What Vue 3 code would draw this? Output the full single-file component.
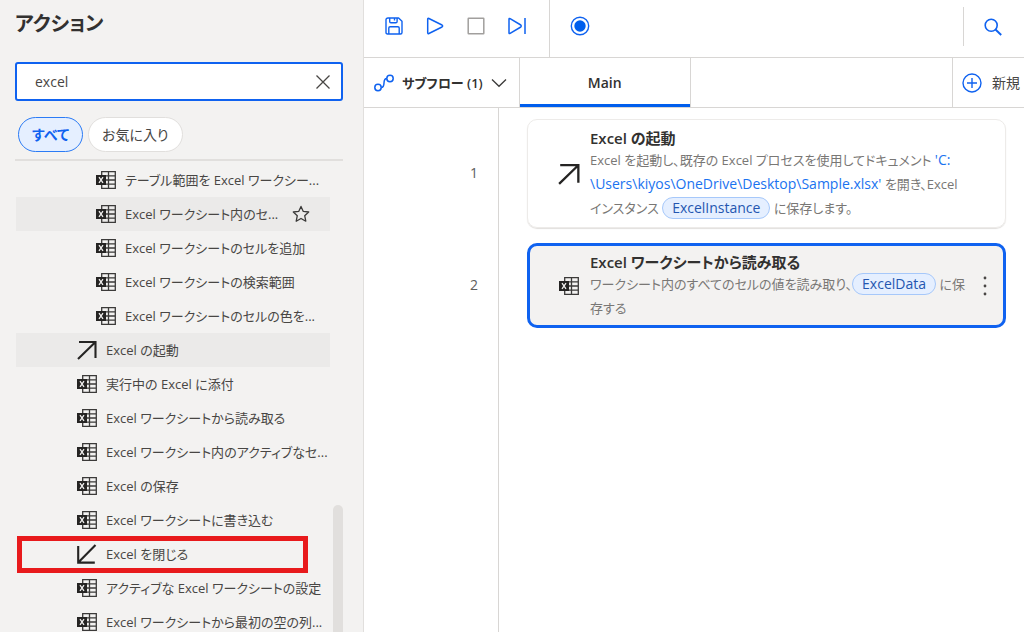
<script setup>
import { ref } from 'vue'

const query = ref('excel')
const filter = ref('all')

const actions = [
  { label: 'テーブル範囲を Excel ワークシー...', icon: 'excel', nested: true },
  { label: 'Excel ワークシート内のセ...', icon: 'excel', nested: true, shaded: true, star: true },
  { label: 'Excel ワークシートのセルを追加', icon: 'excel', nested: true },
  { label: 'Excel ワークシートの検索範囲', icon: 'excel', nested: true },
  { label: 'Excel ワークシートのセルの色を...', icon: 'excel', nested: true },
  { label: 'Excel の起動', icon: 'launch', shaded: true },
  { label: '実行中の Excel に添付', icon: 'excel' },
  { label: 'Excel ワークシートから読み取る', icon: 'excel' },
  { label: 'Excel ワークシート内のアクティブなセ...', icon: 'excel' },
  { label: 'Excel の保存', icon: 'excel' },
  { label: 'Excel ワークシートに書き込む', icon: 'excel' },
  { label: 'Excel を閉じる', icon: 'close', marked: true },
  { label: 'アクティブな Excel ワークシートの設定', icon: 'excel' },
  { label: 'Excel ワークシートから最初の空の列...', icon: 'excel' },
]
</script>

<template>
  <div class="app">
    <svg class="defs" aria-hidden="true">
      <symbol id="i-excel" viewBox="0 0 20 20">
        <path d="M5.7 5V1.7h13.6v16.6H5.7V15M5.7 5.8h13.6M9 10h10.3M5.7 14.2h13.6M12.5 1.7v16.6" fill="none" stroke="#3b3a39" stroke-width="1.3" />
        <rect x="0" y="5" width="10" height="10" fill="#252423" />
        <path d="M3 7.2l4 5.6M7 7.2l-4 5.6" stroke="#f3f2f1" stroke-width="1.3" />
      </symbol>
      <symbol id="i-launch" viewBox="0 0 20 20">
        <path d="M2 2h16.5v16M18.2 2.3L1 19" fill="none" stroke="#252423" stroke-width="2.1" />
      </symbol>
      <symbol id="i-close" viewBox="0 0 20 20">
        <path d="M1.2 2v16.6h16.6M1.5 18.3L18.5 1" fill="none" stroke="#252423" stroke-width="2.1" />
      </symbol>
    </svg>

    <aside class="sidebar">
      <h1>アクション</h1>
      <div class="search">
        <input v-model="query" type="text" aria-label="アクションの検索" />
        <button type="button" aria-label="クリア" @click="query = ''">
          <svg width="16" height="16" viewBox="0 0 16 16"><path d="M1.5 1.5l13 13M14.5 1.5l-13 13" stroke="#484644" stroke-width="1.3" /></svg>
        </button>
      </div>
      <div class="filters">
        <button type="button" :class="{ on: filter === 'all' }" @click="filter = 'all'">すべて</button>
        <button type="button" :class="{ on: filter === 'fav' }" @click="filter = 'fav'">お気に入り</button>
      </div>
      <div class="scroller">
        <ul>
          <li v-for="a in actions" :key="a.label" :class="{ nested: a.nested, shaded: a.shaded, marked: a.marked }">
            <svg class="ico" width="20" height="20"><use :href="'#i-' + a.icon" /></svg>
            <span class="label">{{ a.label }}</span>
            <button v-if="a.star" type="button" class="star" aria-label="お気に入りに追加">
              <svg width="18" height="18" viewBox="0 0 18 18"><path d="M9 1.4l2.3 5 5.4.6-4 3.7 1.1 5.5L9 13.5l-4.8 2.7 1.1-5.5-4-3.7 5.4-.6z" fill="none" stroke="#3b3a39" stroke-width="1.3" stroke-linejoin="round" /></svg>
            </button>
          </li>
        </ul>
        <div class="track"><div class="thumb"></div></div>
      </div>
    </aside>

    <main>
      <header class="toolbar">
        <div class="tools">
          <button type="button" aria-label="保存">
            <svg width="18" height="18" viewBox="0 0 18 18" fill="none" stroke="#0f62f0" stroke-width="1.4" stroke-linejoin="round"><path d="M3 1h10.6L17 4.2V15.5q0 1.5-1.5 1.5H2.5Q1 17 1 15.5V2.7Q1 1 3 1zM4.7 1v3.600q0 1.200 1.200 1.200h5q1.200 0 1.200-1.200V1M9.500 1v2.500M3.800 17v-6q0-1.300 1.300-1.300h7.800q1.300 0 1.300 1.300v6" /></svg>
          </button>
          <button type="button" aria-label="実行">
            <svg width="18" height="18" viewBox="0 0 18 18" fill="none" stroke="#0f62f0" stroke-width="1.5" stroke-linejoin="round"><path d="M1.7 2.2q0-1.200 1.200-.7L16 8q1.300 1 0 2L2.900 16.500q-1.200.5-1.200-.7z" /></svg>
          </button>
          <button type="button" aria-label="停止">
            <svg width="18" height="18" viewBox="0 0 18 18"><rect x="1.2" y="1.2" width="15.6" height="15.6" rx="0.5" fill="none" stroke="#a19f9d" stroke-width="1.5" /></svg>
          </button>
          <button type="button" aria-label="次のアクションを実行">
            <svg width="18" height="18" viewBox="0 0 18 18" fill="none" stroke="#0f62f0" stroke-width="1.5" stroke-linejoin="round"><path d="M1 2.2q0-1.200 1.100-.6L12.800 8q1 1 0 2L2.100 16.400Q1 17 1 15.800zM17 1v16" /></svg>
          </button>
        </div>
        <button type="button" class="record" aria-label="レコーダー">
          <svg width="20" height="20" viewBox="0 0 20 20"><circle cx="10" cy="10" r="8.7" fill="none" stroke="#0f62f0" stroke-width="1.4" /><circle cx="10" cy="10" r="5.7" fill="#005eed" /></svg>
        </button>
        <div class="find">
          <button type="button" aria-label="検索">
            <svg width="18" height="18" viewBox="0 0 18 18" fill="none" stroke="#0f62f0" stroke-width="1.6"><circle cx="7.2" cy="7.2" r="6" /><path d="M11.5 11.5l5.7 5.5" stroke-width="1.9" /></svg>
          </button>
        </div>
      </header>

      <nav class="tabs">
        <button type="button" class="subflow">
          <svg width="20" height="18" viewBox="0 0 20 18" fill="none" stroke="#0f62f0" stroke-width="1.5"><circle cx="4" cy="13.5" r="3.2" /><circle cx="16" cy="4.5" r="3.2" /><path d="M7.2 13.5C12.5 13.5 7.5 4.5 12.8 4.5" /></svg>
          <span>サブフロー (1)</span>
          <svg width="16" height="10" viewBox="0 0 16 10"><path d="M1 1.5l7 6.8 7-6.8" fill="none" stroke="#3b3a39" stroke-width="1.3" /></svg>
        </button>
        <button type="button" class="tab">Main</button>
        <button type="button" class="new">
          <svg width="20" height="20" viewBox="0 0 20 20" fill="none" stroke="#0f62f0" stroke-width="1.4"><circle cx="10" cy="10" r="9" /><path d="M10 5v10M5 10h10" /></svg>
          <span>新規</span>
        </button>
      </nav>

      <section class="flow">
        <div class="step">
          <div class="num">1</div>
          <article>
            <svg class="ico" width="22" height="22"><use href="#i-launch" /></svg>
            <div class="body">
              <h2>Excel の起動</h2>
              <p>
                Excel を起動し、既存の Excel プロセスを使用してドキュメント <a href="#">'C:<br />\Users\kiyos\OneDrive\Desktop\Sample.xlsx'</a> を開き、Excel<br />インスタンス <span class="var">ExcelInstance</span> に保存します。
              </p>
            </div>
          </article>
        </div>
        <div class="step">
          <div class="num">2</div>
          <article class="selected">
            <svg class="ico" width="20" height="20"><use href="#i-excel" /></svg>
            <div class="body">
              <h2>Excel ワークシートから読み取る</h2>
              <p>
                ワークシート内のすべてのセルの値を読み取り、<span class="var">ExcelData</span> に保<br />存する
              </p>
            </div>
            <button type="button" class="more" aria-label="その他">
              <svg width="4" height="20" viewBox="0 0 4 20" fill="#484644"><circle cx="2" cy="2" r="1.4" /><circle cx="2" cy="10" r="1.4" /><circle cx="2" cy="18" r="1.4" /></svg>
            </button>
          </article>
        </div>
        <div class="step rest"><div class="num"></div></div>
      </section>
    </main>
  </div>
</template>

<style>
body {
  margin: 0;
}
</style>

<style scoped>
.app {
  display: flex;
  height: 100vh;
  overflow: hidden;
  background: #fff;
  color: #484644;
  font: 14px/20px "Open Sans", "Noto Sans CJK JP", sans-serif;
  font-feature-settings: "palt";
}
.app * {
  box-sizing: border-box;
}
.defs {
  position: absolute;
  width: 0;
  height: 0;
}
svg {
  display: block;
  flex: none;
}
button {
  display: flex;
  align-items: center;
  padding: 0;
  border: 0;
  background: none;
  color: inherit;
  font: inherit;
  font-feature-settings: inherit;
  white-space: nowrap;
  cursor: pointer;
}
.sidebar {
  display: flex;
  flex-direction: column;
  flex: 0 0 364px;
  min-width: 0;
  padding: 8px 20px 0 15px;
  background: #f3f2f1;
  border-right: 1px solid #e1dfdd;
}
h1 {
  margin: 0 0 22px;
  color: #323130;
  font-size: 20px;
  line-height: 32px;
  font-weight: 700;
}
.search {
  display: flex;
  flex: none;
  align-items: center;
  height: 39px;
  padding: 0 10px 0 18px;
  border: 2px solid #0f62f0;
  border-radius: 3px;
  background: #fff;
}
.search input {
  flex: 1;
  min-width: 0;
  padding: 0;
  border: 0;
  outline: 0;
  background: none;
  color: #484644;
  font: inherit;
}
.filters {
  display: flex;
  flex: none;
  gap: 5px;
  padding: 16px 3px 7px;
  border-bottom: 2px solid #e1dfdd;
}
.filters button {
  height: 35px;
  padding: 0 13px;
  border: 1px solid #e1dfdd;
  border-radius: 18px;
  background: #fff;
}
.filters .on {
  border-color: #2b7bf5;
  background: #e5efff;
  color: #0f62f0;
  font-weight: 700;
}
.scroller {
  display: flex;
  flex: 1;
  min-height: 0;
  padding-top: 2px;
  overflow: hidden;
}
ul {
  flex: 1;
  min-width: 0;
  margin: 0;
  padding: 0 3px 0 1px;
  list-style: none;
  font-size: 13px;
}
li {
  position: relative;
  display: flex;
  align-items: center;
  gap: 9px;
  height: 34px;
  padding-left: 61px;
  white-space: nowrap;
}
li.nested {
  padding-left: 80px;
}
li.shaded {
  background: #ebeae9;
}
li.marked::after {
  content: "";
  position: absolute;
  inset: -1px 22px -2px 1px;
  border: 5px solid #e81a1c;
}
.star {
  margin: 0 20px 0 auto;
}
.track {
  display: flex;
  flex: 0 0 10px;
  flex-direction: column;
  justify-content: flex-end;
}
.thumb {
  height: 27%;
  border-radius: 5px 5px 0 0;
  background: #e1dfdd;
}
main {
  display: flex;
  flex: 1;
  flex-direction: column;
  min-width: 0;
}
.toolbar {
  display: flex;
  flex: none;
  height: 58px;
  border-bottom: 1px solid #d8d6d4;
}
.tools {
  display: flex;
  gap: 23px;
  padding: 0 23px 5px 21px;
  border-right: 1px solid #d8d6d4;
}
.record {
  padding: 0 0 5px 20px;
}
.find {
  display: flex;
  height: 39px;
  margin: 7px 0 0 auto;
  padding: 0 22px 0 20px;
  border-left: 1px solid #d8d6d4;
}
.tabs {
  display: flex;
  flex: none;
  height: 50px;
  border-bottom: 1px solid #d8d6d4;
}
.subflow {
  gap: 8px;
  padding: 0 12px 0 10px;
  border-right: 1px solid #d8d6d4;
  color: #323130;
  font-size: 13px;
  font-weight: 600;
}
.tab {
  justify-content: center;
  width: 171px;
  border-right: 1px solid #d8d6d4;
  box-shadow: inset 0 -3px #005eed;
  color: #323130;
  font-weight: 600;
}
.new {
  gap: 10px;
  margin-left: auto;
  padding: 0 4px 0 9px;
  border-left: 1px solid #d8d6d4;
}
.flow {
  display: flex;
  flex: 1;
  flex-direction: column;
}
.step {
  display: flex;
}
.num {
  display: flex;
  flex: 0 0 135px;
  align-items: center;
  justify-content: flex-end;
  padding: 6px 20px 0 0;
  border-right: 1px solid #d8d6d4;
  color: #605e5c;
}
.rest {
  flex: 1;
}
article {
  display: flex;
  flex: 1;
  align-items: center;
  min-width: 0;
  margin: 11px 18px 4px 28px;
  padding: 8px 16px 7px 30px;
  border: 1px solid #edebe9;
  border-radius: 10px;
  box-shadow: 0 1px 1px #e1dfdd;
}
.step + .step article {
  padding: 6px 16px 5px 28px;
}
article.selected {
  border: 3px solid #0f62f0;
  box-shadow: none;
  background: #f3f2f1;
}
article .ico {
  width: 22px;
}
.body {
  flex: 1;
  min-width: 0;
  padding-left: 10px;
}
h2 {
  margin: 0;
  color: #323130;
  font-size: 15px;
  line-height: 20px;
  font-weight: 600;
}
p {
  margin: 0;
  color: #797775;
  font-size: 13px;
  line-height: 24px;
  white-space: nowrap;
}
a {
  color: #1a73f0;
  font-size: 14px;
  text-decoration: none;
}
.var {
  display: inline-block;
  height: 22px;
  padding: 0 9px;
  border: 1px solid #a6c8fa;
  border-radius: 11px;
  background: #e5efff;
  color: #2456b0;
  font-size: 14px;
  line-height: 20px;
}
</style>
